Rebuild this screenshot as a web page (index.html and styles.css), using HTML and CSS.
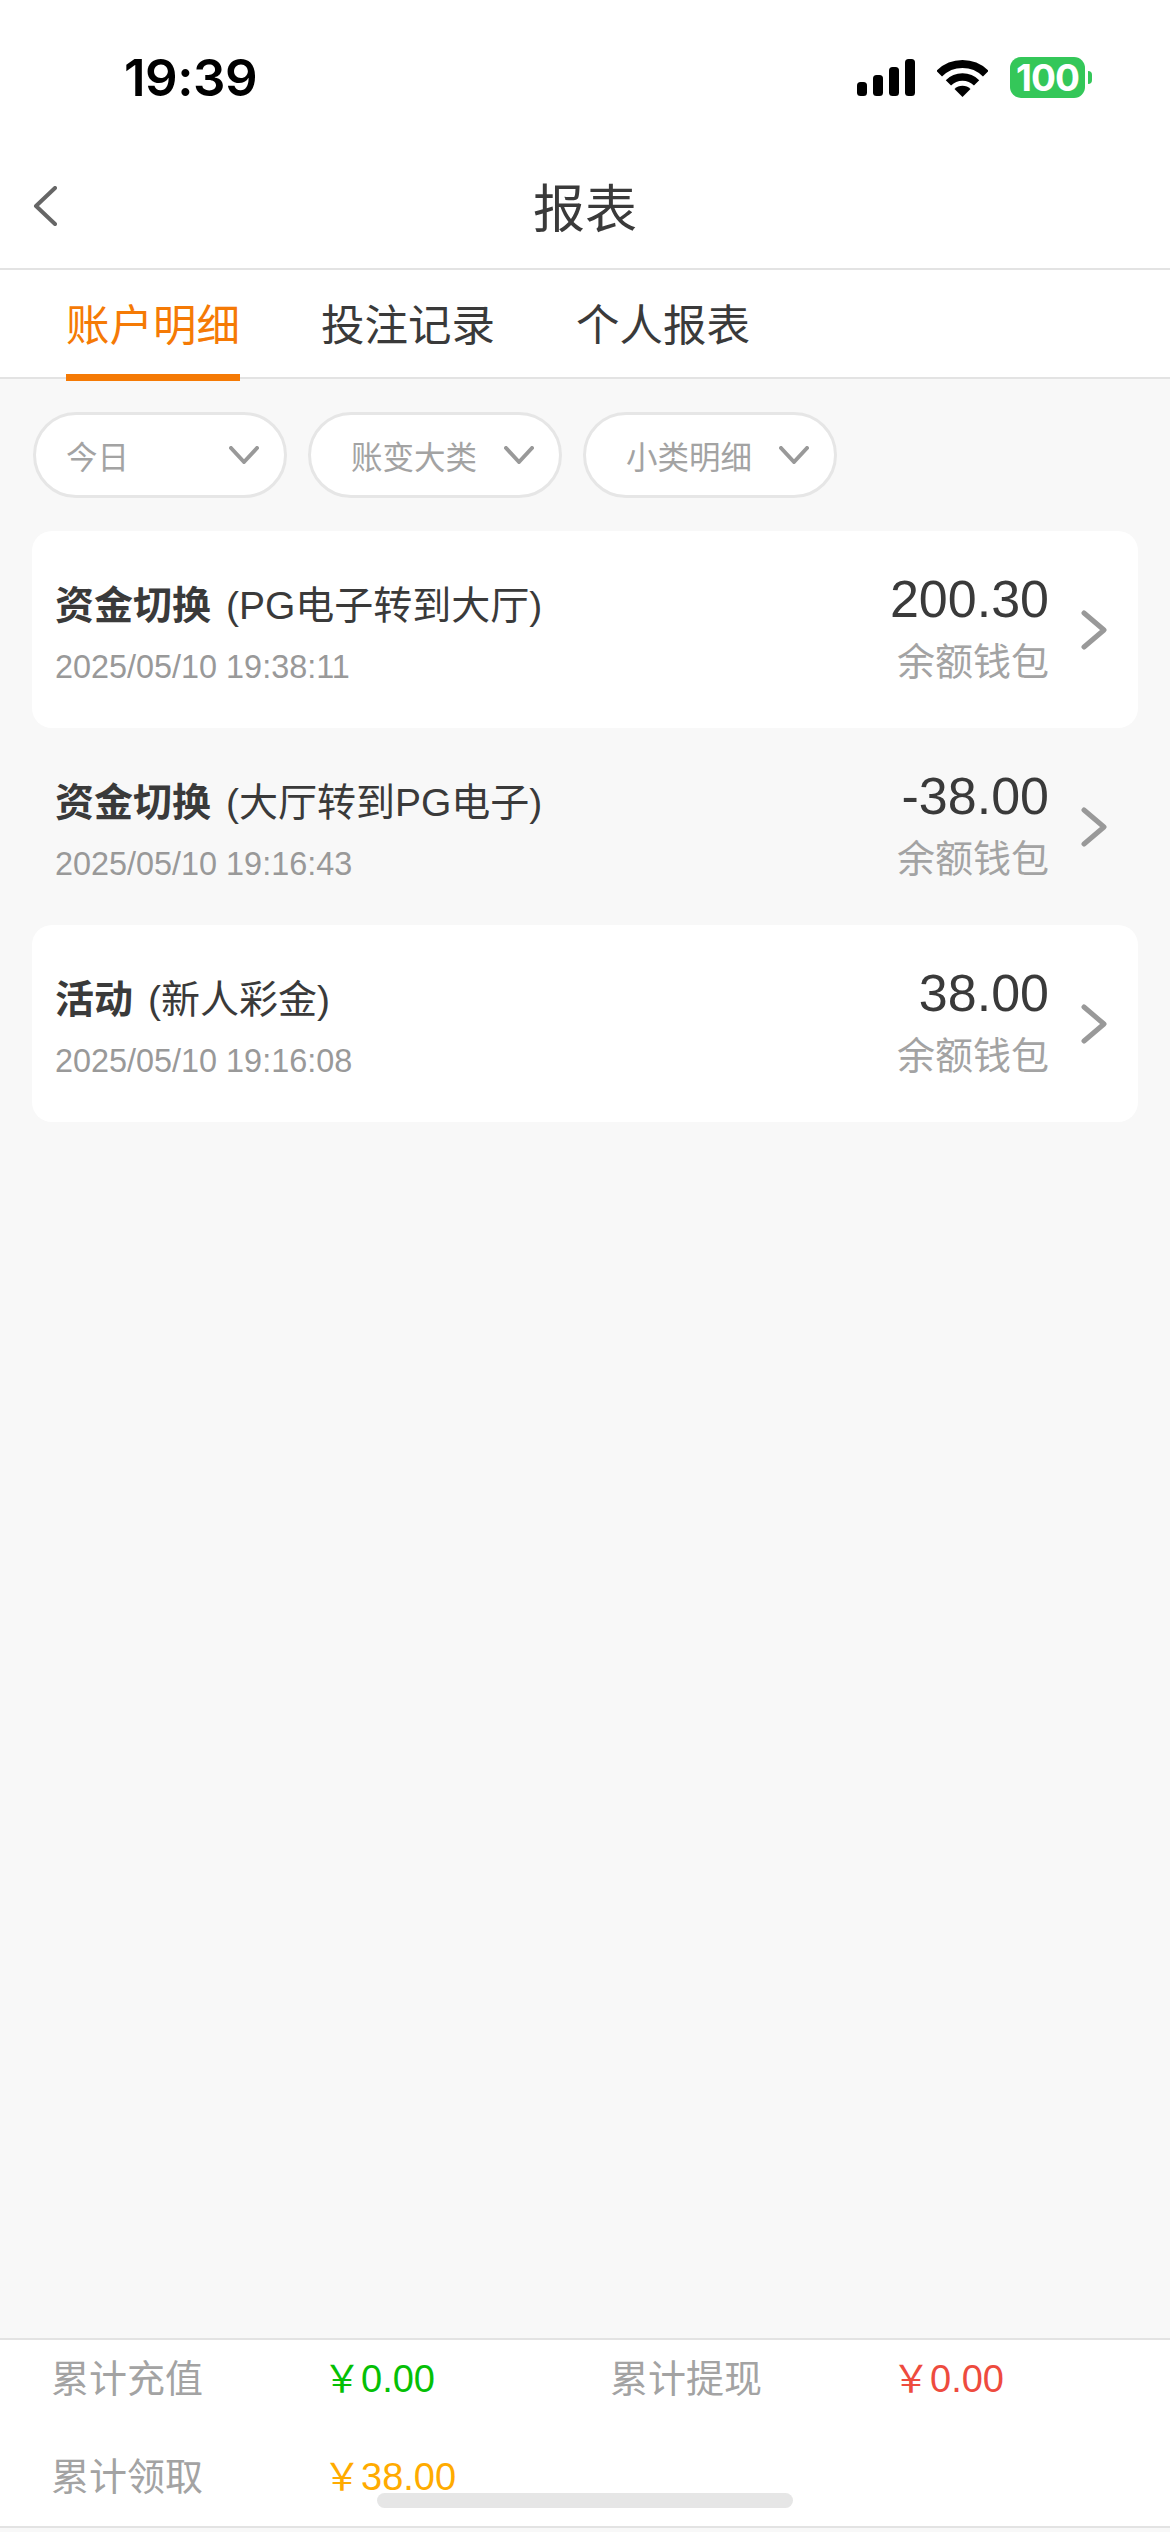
FILE: index.html
```html
<!DOCTYPE html>
<html lang="zh-CN">
<head>
    <meta charset="UTF-8">
    <meta name="viewport" content="width=device-width, initial-scale=1.0">
    <title>报表</title>
    <link rel="stylesheet" href="styles.css">
</head>
<body>
    <div class="page">
        <div class="status-bar">
            <span class="time">19:39</span>
            <div class="status-icons">
                <svg class="signal" width="58" height="37" viewBox="0 0 58 37">
                    <rect x="0" y="23" width="10" height="14" rx="3.5"/>
                    <rect x="16" y="16" width="10" height="21" rx="3.5"/>
                    <rect x="32" y="8" width="10" height="29" rx="3.5"/>
                    <rect x="48" y="0" width="10" height="37" rx="3.5"/>
                </svg>
                <svg class="wifi" width="51" height="38" viewBox="0 0 51 38">
                    <path d="M2.2 14.7A33 33 0 0 1 48.8 14.7" fill="none" stroke="#000" stroke-width="8"/>
                    <path d="M11.4 23.9A20 20 0 0 1 39.6 23.9" fill="none" stroke="#000" stroke-width="7.5"/>
                    <path d="M25.5 38L17.5 30A11.3 11.3 0 0 1 33.5 30Z"/>
                </svg>
                <div class="battery"><span class="battery-level">100</span><i class="battery-tip"></i></div>
            </div>
        </div>

        <div class="nav-bar">
            <svg class="back" width="24" height="40" viewBox="0 0 24 40">
                <path d="M22 2L3 20L22 38" fill="none" stroke="#666" stroke-width="4" stroke-linecap="round" stroke-linejoin="round"/>
            </svg>
            <h1>报表</h1>
        </div>

        <div class="tabs">
            <div class="tab active">账户明细</div>
            <div class="tab">投注记录</div>
            <div class="tab">个人报表</div>
        </div>

        <div class="filters">
            <div class="filter">
                <span class="filter-label">今日</span>
                <svg class="filter-arrow" width="30" height="18" viewBox="0 0 30 18"><path d="M2 2L15 16L28 2"/></svg>
            </div>
            <div class="filter">
                <span class="filter-label">账变大类</span>
                <svg class="filter-arrow" width="30" height="18" viewBox="0 0 30 18"><path d="M2 2L15 16L28 2"/></svg>
            </div>
            <div class="filter">
                <span class="filter-label">小类明细</span>
                <svg class="filter-arrow" width="30" height="18" viewBox="0 0 30 18"><path d="M2 2L15 16L28 2"/></svg>
            </div>
        </div>

        <div class="records">
            <div class="record">
                <div class="record-main">
                    <div class="record-title"><b>资金切换</b>(PG电子转到大厅)</div>
                    <div class="record-date">2025/05/10 19:38:11</div>
                </div>
                <div class="record-side">
                    <div class="record-amount">200.30</div>
                    <div class="record-wallet">余额钱包</div>
                </div>
                <svg class="record-arrow" width="26" height="40" viewBox="0 0 26 40"><path d="M3 3L23 20L3 37"/></svg>
            </div>
            <div class="record">
                <div class="record-main">
                    <div class="record-title"><b>资金切换</b>(大厅转到PG电子)</div>
                    <div class="record-date">2025/05/10 19:16:43</div>
                </div>
                <div class="record-side">
                    <div class="record-amount">-38.00</div>
                    <div class="record-wallet">余额钱包</div>
                </div>
                <svg class="record-arrow" width="26" height="40" viewBox="0 0 26 40"><path d="M3 3L23 20L3 37"/></svg>
            </div>
            <div class="record">
                <div class="record-main">
                    <div class="record-title"><b>活动</b>(新人彩金)</div>
                    <div class="record-date">2025/05/10 19:16:08</div>
                </div>
                <div class="record-side">
                    <div class="record-amount">38.00</div>
                    <div class="record-wallet">余额钱包</div>
                </div>
                <svg class="record-arrow" width="26" height="40" viewBox="0 0 26 40"><path d="M3 3L23 20L3 37"/></svg>
            </div>
        </div>

        <div class="summary">
            <span class="summary-label">累计充值</span>
            <span class="summary-value green">￥0.00</span>
            <span class="summary-label">累计提现</span>
            <span class="summary-value red">￥0.00</span>
            <span class="summary-label">累计领取</span>
            <span class="summary-value amber">￥38.00</span>
        </div>
        <div class="home-indicator"></div>
    </div>
</body>
</html>
```

FILE: styles.css
```css
* {
    box-sizing: border-box;
}
body {
    margin: 0;
    font-family: "Liberation Sans", "Noto Sans CJK SC", sans-serif;
    background-color: #f8f8f8;
    color: #3a3a3a;
}
.page {
    position: relative;
    display: flex;
    flex-direction: column;
    height: 2532px;
    overflow: hidden;
}

/* status bar */
.status-bar {
    display: flex;
    justify-content: space-between;
    align-items: center;
    height: 155px;
    padding: 0 85px 0 124px;
    background-color: #fff;
}
.time {
    font-family: Inter, sans-serif;
    font-size: 51px;
    font-weight: 600;
    letter-spacing: -0.5px;
    color: #000;
}
.status-icons {
    display: flex;
    align-items: center;
    gap: 22px;
}
.battery {
    position: relative;
    display: flex;
    justify-content: center;
    align-items: center;
    width: 75px;
    height: 41px;
    border-radius: 11px;
    background-color: #34c759;
}
.battery-level {
    font-family: Inter, sans-serif;
    font-size: 37px;
    font-weight: 700;
    letter-spacing: -1px;
    color: #fff;
}
.battery-tip {
    position: absolute;
    left: 78px;
    top: 14px;
    width: 4px;
    height: 13px;
    border-radius: 0 7px 7px 0;
    background-color: #34c759;
}

/* nav bar */
.nav-bar {
    position: relative;
    display: flex;
    justify-content: center;
    align-items: center;
    height: 115px;
    padding-bottom: 3px;
    background-color: #fff;
    border-bottom: 2px solid #e3e3e3;
}
.nav-bar h1 {
    margin: 0;
    font-size: 52px;
    font-weight: 400;
    line-height: 1;
}
.back {
    position: absolute;
    left: 33px;
    top: 31px;
}

/* tabs */
.tabs {
    display: flex;
    gap: 81px;
    height: 109px;
    padding-left: 66px;
    background-color: #fff;
    border-bottom: 2px solid #e3e3e3;
}
.tab {
    height: 111px;
    padding-top: 26px;
    font-size: 43.5px;
    line-height: 60px;
}
.tab.active {
    color: #f57a05;
    border-bottom: 7px solid #f57a05;
}

/* filters */
.filters {
    display: flex;
    gap: 21px;
    padding: 33px 0 33px 33px;
}
.filter {
    display: flex;
    justify-content: space-between;
    align-items: center;
    width: 254px;
    height: 86px;
    padding: 0 25px 0 30px;
    background-color: #fff;
    border: 3px solid #e6e6e6;
    border-radius: 43px;
}
.filter + .filter {
    padding-left: 40px;
}
.filter-label {
    font-size: 31.5px;
    color: #a3a3a3;
}
.filter-arrow path {
    fill: none;
    stroke: #999;
    stroke-width: 4;
    stroke-linecap: round;
    stroke-linejoin: round;
}

/* records */
.records {
    flex: 1;
    padding: 0 32px;
}
.record {
    display: flex;
    align-items: center;
    height: 197px;
    padding: 4px 31px 0 23px;
    border-radius: 20px;
}
.record:nth-child(odd) {
    background-color: #fff;
}
.record-main {
    flex: 1;
    padding-top: 1px;
}
.record-title {
    font-size: 39px;
    line-height: 56px;
}
.record-title b {
    margin-right: 15px;
    font-weight: 700;
}
.record-date {
    margin-top: 13px;
    font-size: 32.4px;
    line-height: 40px;
    color: #999;
}
.record-side {
    text-align: right;
}
.record-amount {
    font-size: 52px;
    line-height: 60px;
}
.record-wallet {
    margin: 6px 0;
    font-size: 38px;
    line-height: 54px;
    color: #a3a3a3;
}
.record-arrow {
    margin: -3px 0 0 32px;
}
.record-arrow path {
    fill: none;
    stroke: #999;
    stroke-width: 5;
    stroke-linecap: round;
    stroke-linejoin: round;
}

/* totals at the bottom */
.summary {
    display: grid;
    grid-template-columns: 278px 281px 288px 1fr;
    grid-template-rows: 98px 60px;
    align-items: start;
    height: 190px;
    margin-bottom: 4px;
    padding: 13px 0 0 51px;
    background-color: #fff;
    border-top: 2px solid #e3e3e3;
    border-bottom: 2px solid #e3e3e3;
}
.summary-label {
    font-size: 38px;
    line-height: 52px;
    color: #a3a3a3;
}
.summary-value {
    margin-left: -6px;
    font-size: 38px;
    line-height: 52px;
}
.green {
    color: #05c005;
}
.red {
    color: #ee4b3e;
}
.amber {
    color: #ffab00;
}
.home-indicator {
    position: absolute;
    left: 377px;
    top: 2493px;
    width: 416px;
    height: 15px;
    border-radius: 8px;
    background-color: #e6e6e6;
}
```
